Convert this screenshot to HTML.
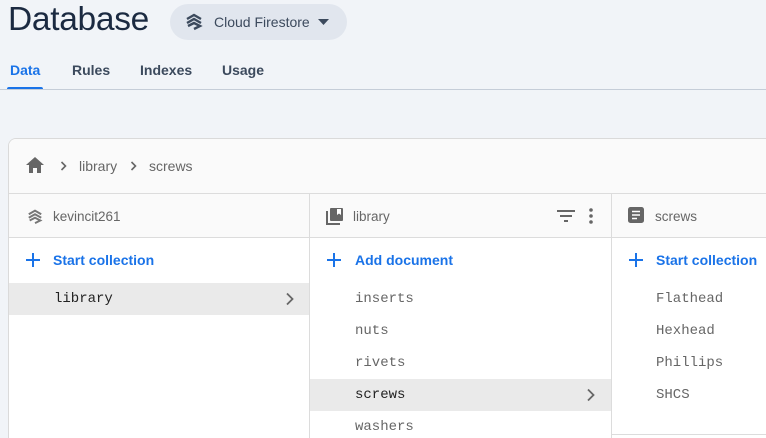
<!DOCTYPE html>
<html><head><meta charset="utf-8"><style>
*{box-sizing:border-box;margin:0;padding:0}
html,body{width:766px;height:438px;overflow:hidden}
body{background:#f1f4f8;font-family:"Liberation Sans",sans-serif;position:relative}
.abs{position:absolute}
.title{left:8px;top:1px;font-size:33.5px;color:#1b2a41;letter-spacing:-0.3px}
.pill{left:170px;top:4px;width:177px;height:36px;border-radius:18px;background:#e1e6ee;}
.pill span{position:absolute;left:44px;top:10px;font-size:14px;color:#3c4a5d}
.tab{top:62px;font-size:14px;font-weight:bold;color:#3c4a5d}
.card{left:8px;top:138px;width:770px;height:300px;background:#fff;border:1px solid #dadada;border-bottom:none;border-radius:8px 0 0 0;overflow:hidden}
.bc{left:0;top:0;width:770px;height:55px;background:#fafafa;border-bottom:1px solid #dcdcdc}
.bc span{position:absolute;top:19px;font-size:14px;color:#666}
.colh{top:55px;height:44px;background:#fafafa;border-bottom:1px solid #dcdcdc}
.colh span{position:absolute;top:15px;font-size:13.5px;color:#666}
.vline{top:55px;width:1px;height:260px;background:#dcdcdc}
.add{font-size:14px;font-weight:bold;color:#1a73e8}
.mono{font-family:"Liberation Mono",monospace;font-size:14px;color:#666}
.sel{background:#eaeaea}
</style></head><body>
<div class="abs title">Database</div>
<div class="abs pill">
<svg class="abs" style="left:14px;top:8px" width="20" height="20" viewBox="0 0 20 20"><path d="M3 7l7-4 7 4M3 11l7-4 7 4M4 14l6-3 6 3-6 3" fill="none" stroke="#3c4a5d" stroke-width="2.4"/></svg>
<span>Cloud Firestore</span>
<svg class="abs" style="left:148px;top:15px" width="12" height="7"><path d="M0 0h11l-5.5 6z" fill="#3c4a5d"/></svg>
</div>
<div class="abs tab" style="left:10px;color:#1a73e8">Data</div>
<div class="abs" style="left:7px;top:87px;width:36px;height:3px;background:#1a73e8;border-radius:2px 2px 0 0"></div>
<div class="abs tab" style="left:72px">Rules</div>
<div class="abs tab" style="left:140px">Indexes</div>
<div class="abs tab" style="left:222px">Usage</div>
<div class="abs" style="left:0;top:89px;width:766px;height:1px;background:#c5cdd8"></div>

<div class="abs card">
<div class="abs bc">
<svg class="abs" style="left:16px;top:17px" width="20" height="18" viewBox="0 0 20 18"><path d="M10 1L1 9h3v8h4v-5h4v5h4V9h3z" fill="#666"/></svg>
<svg class="abs" style="left:51px;top:22px" width="8" height="10"><path d="M1.5 1l4 4-4 4" fill="none" stroke="#666" stroke-width="1.6"/></svg>
<span style="left:70px">library</span>
<svg class="abs" style="left:121px;top:22px" width="8" height="10"><path d="M1.5 1l4 4-4 4" fill="none" stroke="#666" stroke-width="1.6"/></svg>
<span style="left:140px">screws</span>
</div>
<div class="abs colh" style="left:0;width:300px">
<svg class="abs" style="left:17px;top:14px" width="18" height="16" viewBox="0 0 20 18"><path d="M3 7l7-4 7 4M3 11l7-4 7 4M4 14l6-3 6 3-6 3" fill="none" stroke="#777" stroke-width="2.2"/></svg>
<span style="left:44px">kevincit261</span></div>
<div class="abs colh" style="left:301px;width:301px">
<svg class="abs" style="left:16px;top:13px" width="18" height="18" viewBox="0 0 18 18"><path d="M1 4v13h13" fill="none" stroke="#666" stroke-width="2"/><rect x="4" y="1" width="13" height="13" rx="1" fill="#666"/><path d="M11 2h4v6l-2-1.5-2 1.5z" fill="#fff"/></svg>
<span style="left:43px">library</span>
<svg class="abs" style="left:246px;top:15px" width="20" height="14"><path d="M1 2h18M4 7h12M8 12h4" stroke="#666" stroke-width="2"/></svg>
<svg class="abs" style="left:278px;top:13px" width="6" height="18"><circle cx="3" cy="3" r="1.8" fill="#666"/><circle cx="3" cy="9" r="1.8" fill="#666"/><circle cx="3" cy="15" r="1.8" fill="#666"/></svg>
</div>
<div class="abs colh" style="left:603px;width:170px">
<svg class="abs" style="left:16px;top:13px" width="17" height="17"><rect x="0" y="0" width="16" height="16" rx="2.5" fill="#666"/><path d="M4 4.5h8M4 8h8M4 11.5h5" stroke="#fff" stroke-width="1.6"/></svg>
<span style="left:43px">screws</span></div>
<div class="abs vline" style="left:300px"></div>
<div class="abs vline" style="left:602px"></div>

<svg class="abs" style="left:16px;top:113px" width="16" height="16"><path d="M8 1v14M1 8h14" stroke="#1a73e8" stroke-width="2"/></svg>
<div class="abs add" style="left:44px;top:113px">Start collection</div>
<div class="abs sel" style="left:0;top:144px;width:300px;height:32px"></div>
<div class="abs mono" style="left:45px;top:152px;color:#222">library</div>
<svg class="abs" style="left:276px;top:153px" width="10" height="14"><path d="M2 1.5l5.5 5.5-5.5 5.5" fill="none" stroke="#666" stroke-width="1.8"/></svg>

<svg class="abs" style="left:317px;top:113px" width="16" height="16"><path d="M8 1v14M1 8h14" stroke="#1a73e8" stroke-width="2"/></svg>
<div class="abs add" style="left:346px;top:113px">Add document</div>
<div class="abs mono" style="left:346px;top:152px">inserts</div>
<div class="abs mono" style="left:346px;top:184px">nuts</div>
<div class="abs mono" style="left:346px;top:216px">rivets</div>
<div class="abs sel" style="left:301px;top:240px;width:301px;height:32px"></div>
<div class="abs mono" style="left:346px;top:248px;color:#222">screws</div>
<svg class="abs" style="left:577px;top:249px" width="10" height="14"><path d="M2 1.5l5.5 5.5-5.5 5.5" fill="none" stroke="#666" stroke-width="1.8"/></svg>
<div class="abs mono" style="left:346px;top:280px">washers</div>

<svg class="abs" style="left:619px;top:113px" width="16" height="16"><path d="M8 1v14M1 8h14" stroke="#1a73e8" stroke-width="2"/></svg>
<div class="abs add" style="left:647px;top:113px">Start collection</div>
<div class="abs mono" style="left:647px;top:152px">Flathead</div>
<div class="abs mono" style="left:647px;top:184px">Hexhead</div>
<div class="abs mono" style="left:647px;top:216px">Phillips</div>
<div class="abs mono" style="left:647px;top:248px">SHCS</div>
<div class="abs" style="left:603px;top:295px;width:170px;height:1px;background:#dcdcdc"></div>
</div>
</body></html>
